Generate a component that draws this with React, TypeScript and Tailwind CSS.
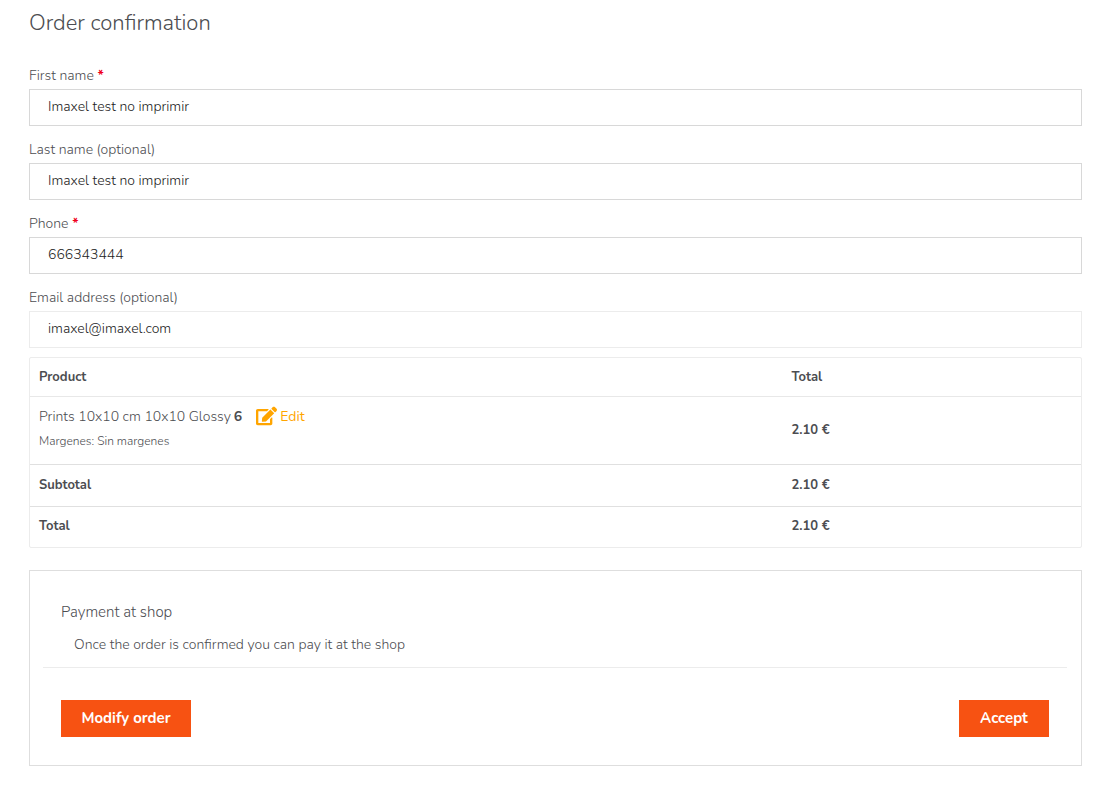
import React from "react";
import { FaEdit } from "react-icons/fa";

const fields = [
  { id: "firstName", label: "First name", required: true, type: "text", value: "Imaxel test no imprimir", border: "border-[#d8d8d8]" },
  { id: "lastName", label: "Last name (optional)", required: false, type: "text", value: "Imaxel test no imprimir", border: "border-[#d8d8d8]" },
  { id: "phone", label: "Phone", required: true, type: "tel", value: "666343444", border: "border-[#d8d8d8]" },
  { id: "email", label: "Email address (optional)", required: false, type: "email", value: "imaxel@imaxel.com", border: "border-[#ececec]" },
];

const totals = [
  { label: "Subtotal", amount: "2.10 €", height: "h-[42px]" },
  { label: "Total", amount: "2.10 €", height: "h-[41px]" },
];

function OrderTable() {
  return (
    <table className="mt-[9px] w-full table-fixed border-separate border-spacing-0 rounded-[2px] border border-[#ececec] text-left text-[13px] leading-5">
      <colgroup>
        <col className="w-[71.6%]" />
        <col />
      </colgroup>
      <thead>
        <tr>
          <th scope="col" className="h-[38px] px-[9px] font-bold">Product</th>
          <th scope="col" className="h-[38px] px-[9px] font-bold">Total</th>
        </tr>
      </thead>
      <tbody>
        <tr>
          <td className="h-[68px] border-t border-[#e8e8e8] px-[9px] pt-[10px] align-top">
            <div className="flex h-5 items-center text-sm leading-5">
              <span className="font-light">Prints 10x10 cm 10x10 Glossy</span>
              <strong className="ml-[3px] font-bold">6</strong>
              <a href="#edit" className="ml-[14px] flex items-center gap-[3px] font-normal text-[#ffa500]">
                <FaEdit className="mb-0.5 h-5 w-[21px]" aria-hidden="true" />
                Edit
              </a>
            </div>
            <p className="mt-1 text-xs leading-5 font-light">Margenes: Sin margenes</p>
          </td>
          <td className="border-t border-[#e8e8e8] px-[9px] pb-0.5 font-bold">2.10 €</td>
        </tr>
        {totals.map((row) => (
          <tr key={row.label}>
            <th scope="row" className={`border-t border-[#e0e0e0] px-[9px] pb-0.5 font-bold ${row.height}`}>{row.label}</th>
            <td className="border-t border-[#e0e0e0] px-[9px] pb-0.5 font-bold">{row.amount}</td>
          </tr>
        ))}
      </tbody>
    </table>
  );
}

function PaymentBox() {
  return (
    <section className="mt-[22px] border border-[#dedede] pt-[31px] pr-[14px] pb-7 pl-[13px]">
      <h2 className="px-[18px] text-[15px] leading-5 font-light">Payment at shop</h2>
      <p className="mt-[13px] border-b border-[#ececec] px-[31px] pb-3 text-sm leading-5 font-light">
        Once the order is confirmed you can pay it at the shop
      </p>
      <div className="mt-8 flex items-start justify-between px-[18px]">
        <button type="button" className="h-[37px] w-[130px] bg-[#f75212] pb-0.5 text-[15px] leading-5 font-bold text-white">
          Modify order
        </button>
        <button type="button" className="h-[37px] w-[90px] bg-[#f75212] pb-0.5 text-[15px] leading-5 font-bold text-white">
          Accept
        </button>
      </div>
    </section>
  );
}

export default function App() {
  return (
    <main className="min-h-screen bg-white pt-2 pr-[26px] pb-6 pl-[29px] font-['Nunito','Open_Sans',sans-serif] text-[#4c4d51]">
      <h1 className="text-[22px] leading-[30px] font-light">Order confirmation</h1>

      <form className="mt-7 flex flex-col gap-[14px]">
        {fields.map((field) => (
          <div key={field.id}>
            <label htmlFor={field.id} className="mb-[3px] block text-sm leading-5 font-light">
              {field.label}
              {field.required && <span className="font-bold text-[#f0001c]"> *</span>}
            </label>
            <input
              id={field.id}
              type={field.type}
              defaultValue={field.value}
              className={`block h-[37px] w-full border bg-white px-[18px] pb-0.5 text-sm font-light text-[#222222] outline-none ${field.border}`}
            />
          </div>
        ))}
      </form>

      <OrderTable />
      <PaymentBox />
    </main>
  );
}
